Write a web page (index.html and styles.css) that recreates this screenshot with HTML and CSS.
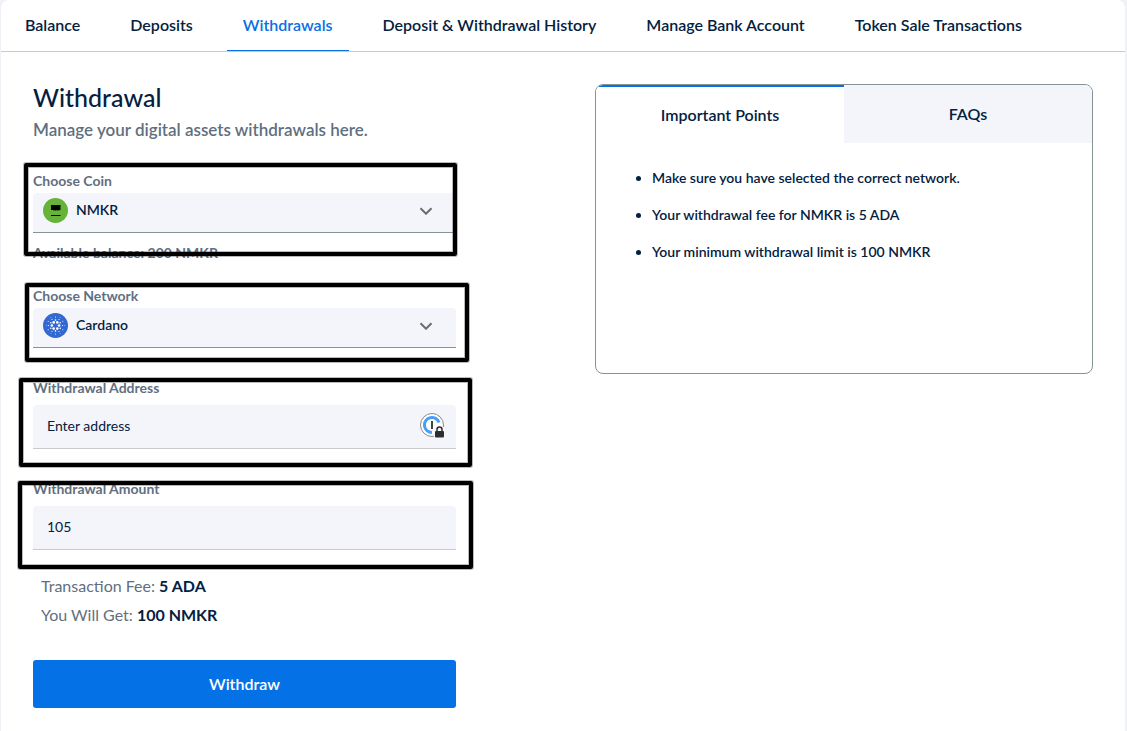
FILE: index.html
```html
<!DOCTYPE html>
<html lang="en">
<head>
  <meta charset="UTF-8" />
  <meta name="viewport" content="width=device-width, initial-scale=1.0" />
  <title>Withdrawals</title>
  <link rel="stylesheet" href="styles.css">
</head>
<body>
  <div class="card">
    <nav class="tabs">
      <a href="#balance">Balance</a>
      <a href="#deposits">Deposits</a>
      <a href="#withdrawals" class="active">Withdrawals</a>
      <a href="#history">Deposit &amp; Withdrawal History</a>
      <a href="#bank">Manage Bank Account</a>
      <a href="#token-sale">Token Sale Transactions</a>
    </nav>

    <main class="content">
      <form class="withdraw-form">
        <h1>Withdrawal</h1>
        <p class="subtitle">Manage your digital assets withdrawals here.</p>

        <div class="field coin">
          <label for="coin">Choose Coin</label>
          <div class="select-box">
            <svg class="coin-icon" viewBox="0 0 25 25" aria-hidden="true">
              <circle cx="12.5" cy="12.5" r="12.5" fill="#67b239"/>
              <path d="M8 7h9.500v5h-1l-.5.7-.8-.7-.8.7-.9-.7-.9.7-.9-.7-.9.7-.8-.7H8z" fill="#000"/>
              <path d="M8 17h9.500v1H8z" fill="#000"/>
            </svg>
            <select id="coin">
              <option>NMKR</option>
            </select>
            <svg class="chevron" viewBox="0 0 14 8" aria-hidden="true"><path d="M1.500 1.200 7 6.700l5.500-5.500"/></svg>
          </div>
          <p class="available">Available balance: 200 NMKR</p>
        </div>

        <div class="field network">
          <label for="network">Choose Network</label>
          <div class="select-box">
            <svg class="coin-icon" viewBox="-12.5 -12.5 25 25" aria-hidden="true">
              <circle r="12.5" fill="#3468d1"/>
              <g fill="#fff">
                <circle cx="3.6" cy="0" r="1.3"/><circle cx="-3.6" cy="0" r="1.3"/>
                <circle cx="1.8" cy="3.1" r="1.3"/><circle cx="-1.8" cy="3.1" r="1.3"/>
                <circle cx="1.8" cy="-3.1" r="1.3"/><circle cx="-1.8" cy="-3.1" r="1.3"/>
                <circle cx="0" cy="5.400" r=".8"/><circle cx="0" cy="-5.400" r=".8"/>
                <circle cx="4.700" cy="2.700" r=".8"/><circle cx="-4.700" cy="2.700" r=".8"/>
                <circle cx="4.700" cy="-2.700" r=".8"/><circle cx="-4.700" cy="-2.700" r=".8"/>
                <circle cx="7" cy="0" r=".6"/><circle cx="-7" cy="0" r=".6"/>
                <circle cx="3.500" cy="6" r=".6"/><circle cx="-3.500" cy="6" r=".6"/>
                <circle cx="3.500" cy="-6" r=".6"/><circle cx="-3.500" cy="-6" r=".6"/>
                <circle cx="0" cy="8.400" r=".5"/><circle cx="0" cy="-8.400" r=".5"/>
                <circle cx="7.300" cy="4.200" r=".5"/><circle cx="-7.300" cy="4.200" r=".5"/>
                <circle cx="7.300" cy="-4.200" r=".5"/><circle cx="-7.300" cy="-4.200" r=".5"/>
                <circle cx="9.300" cy="0" r=".4"/><circle cx="-9.300" cy="0" r=".4"/>
                <circle cx="4.600" cy="8.100" r=".4"/><circle cx="-4.600" cy="8.100" r=".4"/>
                <circle cx="4.600" cy="-8.100" r=".4"/><circle cx="-4.600" cy="-8.100" r=".4"/>
              </g>
            </svg>
            <select id="network">
              <option>Cardano</option>
            </select>
            <svg class="chevron" viewBox="0 0 14 8" aria-hidden="true"><path d="M1.500 1.200 7 6.700l5.500-5.500"/></svg>
          </div>
        </div>

        <div class="field address">
          <label for="address">Withdrawal Address</label>
          <div class="input-box">
            <input id="address" type="text" placeholder="Enter address">
            <svg class="key-icon" viewBox="0 0 25 25" aria-hidden="true">
              <circle cx="12" cy="12" r="11.500" fill="#fff" stroke="#8a8a8a"/>
              <path d="M12 19.500A7.500 7.500 0 1 1 19 9.500" fill="none" stroke="#46a0fb" stroke-width="3"/>
              <path d="M12 8v8" stroke="#444" stroke-width="2"/>
              <path d="M14 14h11v11H14z" fill="#f5f6fa"/>
              <rect x="15" y="18" width="9" height="6.500" rx="1" fill="#2e2e2e"/>
              <path d="M17 18v-1.500a2.500 2.500 0 0 1 5 0V18" fill="none" stroke="#2e2e2e" stroke-width="1.500"/>
            </svg>
          </div>
        </div>

        <div class="field amount">
          <label for="amount">Withdrawal Amount</label>
          <div class="input-box">
            <input id="amount" type="text" value="105">
          </div>
        </div>

        <div class="summary">
          <p>Transaction Fee: <strong>5 ADA</strong></p>
          <p>You Will Get: <strong>100 NMKR</strong></p>
        </div>

        <button type="button" class="submit">Withdraw</button>
      </form>

      <aside class="info">
        <div class="info-tabs">
          <button type="button" class="active">Important Points</button>
          <button type="button">FAQs</button>
        </div>
        <ul>
          <li>Make sure you have selected the correct network.</li>
          <li>Your withdrawal fee for NMKR is 5 ADA</li>
          <li>Your minimum withdrawal limit is 100 NMKR</li>
        </ul>
      </aside>
    </main>
  </div>
</body>
</html>
```
FILE: styles.css
```css
* {
  box-sizing: border-box;
}

body {
  margin: 0;
  padding: 0 2px 0 1px;
  background: #f0f1f6;
  color: #03213f;
  font-family: Lato, "Liberation Sans", sans-serif;
  font-size: 14px;
  line-height: 20px;
}

h1, p, ul {
  margin: 0;
}

button, input, select {
  font: inherit;
  color: inherit;
}

.card {
  min-height: 100vh;
  background: #fff;
  border-radius: 8px 8px 0 0;
}

/* top navigation */
.tabs {
  display: flex;
  gap: 18px;
  padding: 0 8px;
  border-bottom: 1px solid #c8cacc;
}

.tabs a {
  padding: 15px 16px;
  border-bottom: 1px solid transparent;
  color: #03213f;
  font-size: 16px;
  font-weight: 600;
  text-decoration: none;
  white-space: nowrap;
}

.tabs .active {
  color: #0870e4;
  border-color: #0870e4;
}

.content {
  display: grid;
  grid-template-columns: 423fr 498fr;
  gap: 139px;
  align-items: start;
  padding: 32px;
}

/* form */
h1 {
  font-size: 25px;
  font-weight: 500;
  line-height: 26px;
}

.subtitle {
  margin: 10px 0 31px;
  color: #5f6f81;
  font-size: 17px;
  font-weight: 600;
}

.field {
  position: relative;
}

.field label {
  display: block;
  color: #5f6f81;
  font-weight: bold;
}

/* thick marker frame round each field */
.field::after {
  content: "";
  position: absolute;
  border: 4px solid #000;
  border-radius: 2px;
  box-shadow: 0 0 0 1px rgba(0, 0, 0, 0.27), inset 0 0 0 1px rgba(0, 0, 0, 0.27);
  pointer-events: none;
}

.coin::after {
  inset: -8px -1px 7px -9px;
}

.network::after {
  inset: -3px -13px -14px -8px;
}

.address::after {
  inset: 0 -16px -18px -14px;
}

.amount::after {
  inset: 2px -17px -19px -15px;
}

.select-box {
  position: relative;
  height: 40px;
  margin-top: 2px;
  background: #f4f5fa;
  border-bottom: 1px solid #869393;
  border-radius: 4px 4px 0 0;
}

.select-box select {
  display: block;
  width: 100%;
  height: 100%;
  padding: 0 40px 5px 43px;
  border: 0;
  background: transparent;
  appearance: none;
  font-weight: 600;
}

.coin-icon {
  position: absolute;
  top: 5px;
  left: 10px;
  width: 25px;
  height: 25px;
  pointer-events: none;
}

.chevron {
  position: absolute;
  top: 14px;
  right: 23px;
  width: 14px;
  height: 8px;
  fill: none;
  stroke: #6b6b6b;
  stroke-width: 2;
  pointer-events: none;
}

.available {
  margin-top: 10px;
  color: #5f6f81;
  font-weight: bold;
}

.network {
  margin-top: 23px;
}

.address {
  margin-top: 30px;
}

.amount {
  margin-top: 30px;
}

.input-box {
  position: relative;
  margin-top: 7px;
}

.input-box input {
  display: block;
  width: 100%;
  height: 44px;
  padding: 0 44px 2px 14px;
  border: 0;
  border-bottom: 1px solid #c8cacc;
  border-radius: 4px 4px 0 0;
  background: #f4f5fa;
}

.input-box input::placeholder {
  color: #03213f;
  opacity: 1;
}

.key-icon {
  position: absolute;
  top: 8px;
  right: 11px;
  width: 25px;
  height: 25px;
}

.summary {
  display: grid;
  gap: 9px;
  margin: 26px 8px 35px;
  color: #5f6f81;
  font-size: 16px;
}

.summary strong {
  color: #03213f;
}

.submit {
  width: 100%;
  height: 48px;
  border: 0;
  border-radius: 3px;
  background: #0472e6;
  color: #fff;
  font-size: 16px;
  font-weight: 600;
}

/* info panel */
.info {
  min-height: 290px;
  border: 1px solid #869393;
  border-radius: 8px;
  overflow: hidden;
}

.info-tabs {
  display: grid;
  grid-template-columns: 1fr 1fr;
}

.info-tabs button {
  height: 58px;
  border: 0;
  background: #f4f5fa;
  font-size: 16px;
  font-weight: 600;
}

.info-tabs .active {
  border-top: 2px solid #0870e4;
  background: #fff;
}

.info ul {
  display: grid;
  gap: 17px;
  padding: 25px 16px 25px 56px;
  font-weight: 600;
}
```
